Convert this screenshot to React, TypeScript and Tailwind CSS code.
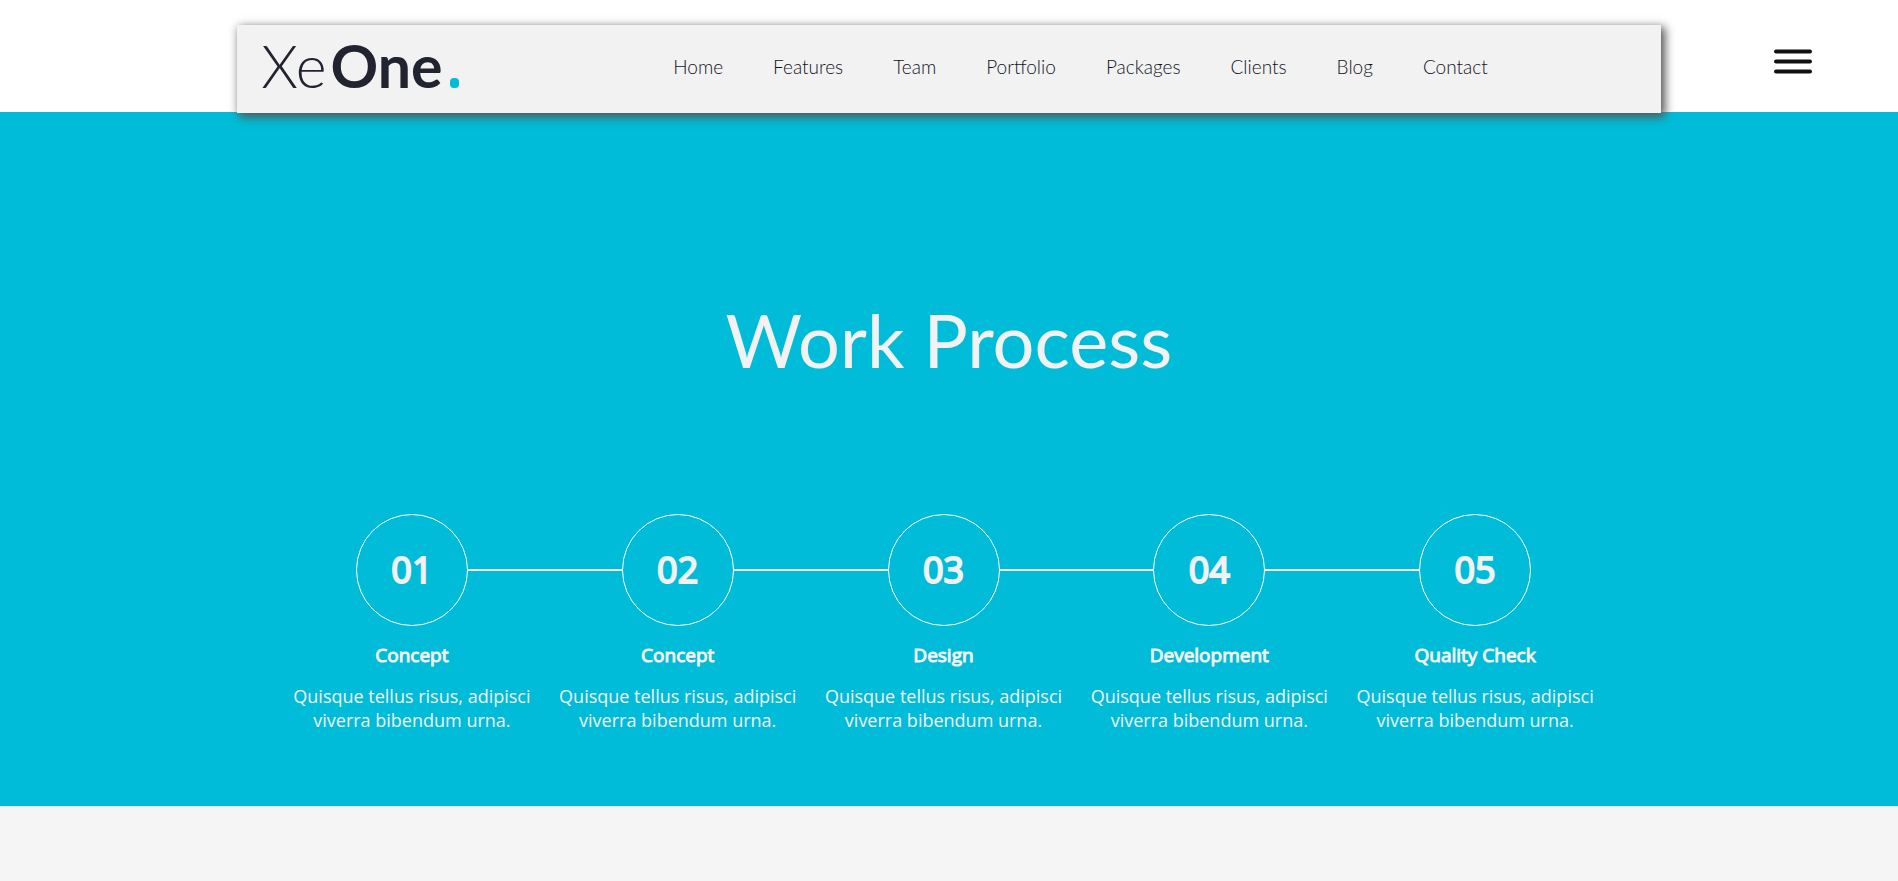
const links = ["Home", "Features", "Team", "Portfolio", "Packages", "Clients", "Blog", "Contact"];

const steps = [
  { number: "01", title: "Concept" },
  { number: "02", title: "Concept" },
  { number: "03", title: "Design" },
  { number: "04", title: "Development" },
  { number: "05", title: "Quality Check" },
];

function Logo() {
  return (
    <a href="#home" aria-label="XeOne" className="flex w-[200px] shrink-0 items-baseline text-[59px] leading-none text-[#212331]">
      <span className="font-light">Xe</span>
      <span className="ml-1 font-bold">One</span>
      <svg viewBox="0 0 9 10" className="ml-2 h-[10px] w-[9px]" aria-hidden="true">
        <rect width="9" height="10" rx="4" fill="#00bcd8" />
      </svg>
    </a>
  );
}

function Header() {
  return (
    <header className="relative flex h-28 items-start justify-center bg-white pt-[25px]">
      <div className="flex h-[88px] w-3/4 items-center bg-[#f2f2f2] pb-2 pl-6 shadow-[3px_3px_9px_1px_#555]">
        <Logo />
        <nav className="ml-[212px] flex gap-[50px] pt-1 text-[19px] font-light leading-6 text-[#111222]">
          {links.map((link) => (
            <a key={link} href={`#${link.toLowerCase()}`}>
              {link}
            </a>
          ))}
        </nav>
      </div>
      <button type="button" aria-label="Open menu" className="absolute right-[86px] top-[49px]">
        <svg viewBox="0 0 38 26" className="h-[26px] w-[38px]" fill="#111">
          <rect y="0.5" width="38" height="4" rx="2" />
          <rect y="10.5" width="38" height="4" rx="2" />
          <rect y="20.5" width="38" height="4" rx="2" />
        </svg>
      </button>
    </header>
  );
}

function Process() {
  return (
    <section className="bg-[#00bcd8] pb-[74px] pt-[184px] text-[#f2f2f2]">
      <h2 className="text-center text-[74px] font-normal leading-[88px]">Work Process</h2>
      <ol className="ml-[279px] mr-[290px] mt-[130px] grid grid-cols-5 font-['Open_Sans',sans-serif]">
        {steps.map((step, i) => (
          <li key={step.number} className="flex flex-col items-center text-center">
            <div className="flex w-full items-center">
              <span className={i > 0 ? "h-[2px] flex-1 bg-white" : "flex-1"} />
              <span className="flex size-28 items-center justify-center rounded-full border border-white text-[36px] font-normal leading-none [-webkit-text-stroke:2px_#f2f2f2]">
                {step.number}
              </span>
              <span className={i < steps.length - 1 ? "h-[2px] flex-1 bg-white" : "flex-1"} />
            </div>
            <h3 className="mt-[15px] text-[19px] font-normal leading-7 [-webkit-text-stroke:1px_#f2f2f2]">{step.title}</h3>
            <p className="mt-[15px] px-3 text-[18px] leading-6">Quisque tellus risus, adipisci viverra bibendum urna.</p>
          </li>
        ))}
      </ol>
    </section>
  );
}

export default function App() {
  return (
    <div className="min-h-screen bg-[#f5f5f5] font-['Lato',sans-serif]">
      <Header />
      <main>
        <Process />
      </main>
    </div>
  );
}
